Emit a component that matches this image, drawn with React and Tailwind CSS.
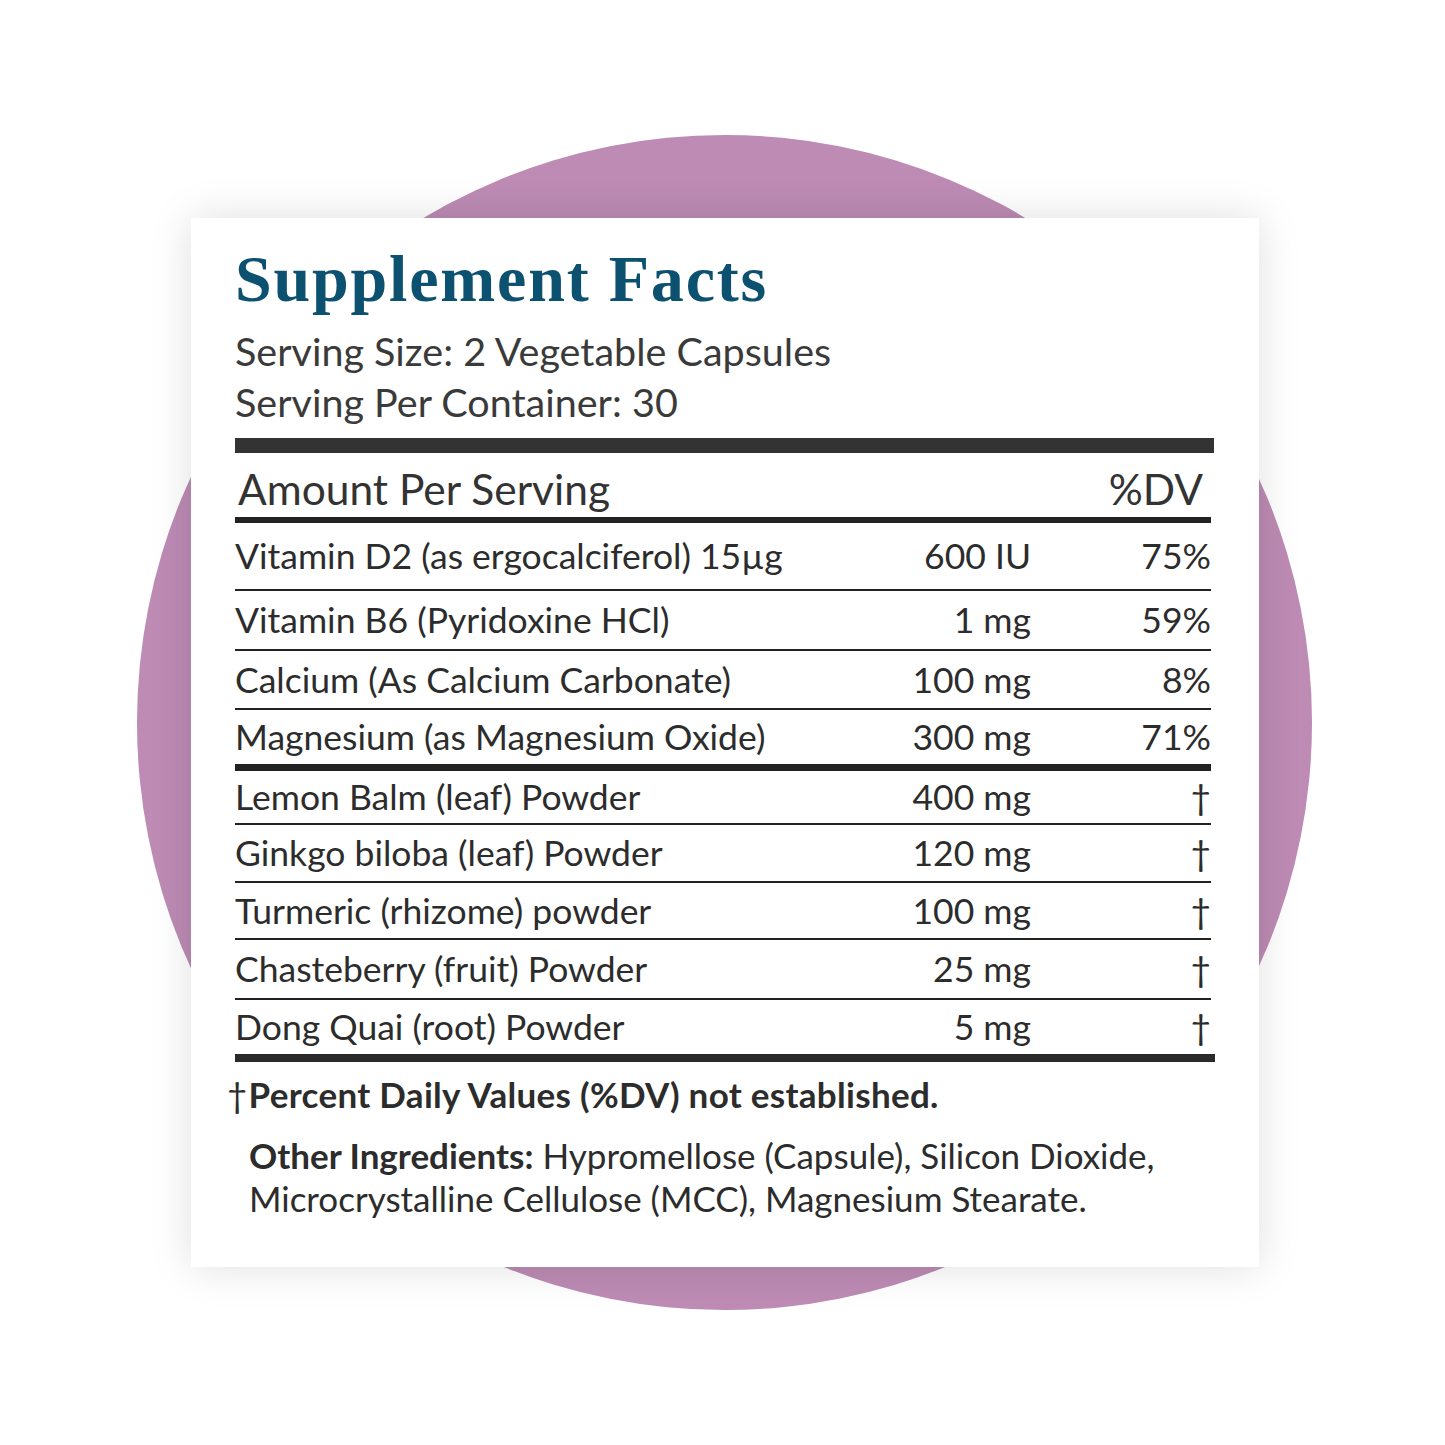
import React from "react";

const rows = [
  { name: "Vitamin D2 (as ergocalciferol) 15µg", amount: "600 IU", dv: "75%", h: "h-[66px]", line: "border-b-2" },
  { name: "Vitamin B6 (Pyridoxine HCl)", amount: "1 mg", dv: "59%", h: "h-[58px]", line: "border-b-2" },
  { name: "Calcium (As Calcium Carbonate)", amount: "100 mg", dv: "8%", h: "h-[57px]", line: "border-b-2" },
  { name: "Magnesium (as Magnesium Oxide)", amount: "300 mg", dv: "71%", h: "h-[54px]", line: "border-b-[7px]" },
  { name: "Lemon Balm (leaf) Powder", amount: "400 mg", dv: "†", h: "h-[52px]", line: "border-b-2" },
  { name: "Ginkgo biloba (leaf) Powder", amount: "120 mg", dv: "†", h: "h-[56px]", line: "border-b-2" },
  { name: "Turmeric (rhizome) powder", amount: "100 mg", dv: "†", h: "h-[55px]", line: "border-b-2" },
  { name: "Chasteberry (fruit) Powder", amount: "25 mg", dv: "†", h: "h-[58px]", line: "border-b-2" },
  { name: "Dong Quai (root) Powder", amount: "5 mg", dv: "†", h: "h-[54px]", line: "" },
];

const App = () => {
  return (
    <div className="relative w-[1445px] h-[1445px] bg-white overflow-hidden">
      {/* backdrop circle */}
      <div className="absolute left-[137px] top-[135px] w-[1175px] h-[1175px] rounded-full bg-[#bd8bb4]"></div>

      <div className="relative pt-[218px] pl-[191px]">
        <div className="w-[1068px] h-[1049px] bg-white shadow-[0_0_40px_rgba(0,0,0,0.13)] pl-[44px] pr-[48px] pt-[23px] text-[#2c2c2c] font-['Lato',sans-serif]">
          <h1 className="font-['Liberation_Serif',serif] font-bold text-[#0c5170] text-[66px] leading-[76px] tracking-[1.8px]">
            Supplement Facts
          </h1>
          <div className="mt-[8px] text-[39.5px] leading-[51px] text-[#3a3a3a]">
            <p>Serving Size: 2 Vegetable Capsules</p>
            <p>Serving Per Container: 30</p>
          </div>

          <div className="mt-[11px] h-[15px] bg-[#333333] -mr-[3px]"></div>
          <div className="flex items-center justify-between h-[70px] pt-[8px] border-b-[6px] border-[#222] pl-[3px] pr-[8px] text-[42.5px] text-[#333]">
            <span>Amount Per Serving</span>
            <span>%DV</span>
          </div>

          {rows.map((row, key) => (
            <div
              key={key}
              className={`flex items-center ${row.h} ${row.line} box-content border-[#222] text-[35.5px]`}
            >
              <span className="flex-1">{row.name}</span>
              <span className="w-[200px] text-right">{row.amount}</span>
              <span className="w-[180px] text-right">{row.dv}</span>
            </div>
          ))}
          <div className="h-[8px] bg-[#2a2a2a] -mr-[4px]"></div>

          <p className="mt-[10px] -ml-[8px] text-[35px] leading-[44px] font-bold tracking-[0.3px]">
            <span className="font-normal mr-[1px]">†</span>
            Percent Daily Values (%DV) not established.
          </p>
          <p className="mt-[18px] ml-[14px] text-[35px] leading-[43px] w-[960px]">
            <span className="font-bold">Other Ingredients:</span> Hypromellose (Capsule), Silicon Dioxide,
            Microcrystalline Cellulose (MCC), Magnesium Stearate.
          </p>
        </div>
      </div>
    </div>
  );
};

export default App;
